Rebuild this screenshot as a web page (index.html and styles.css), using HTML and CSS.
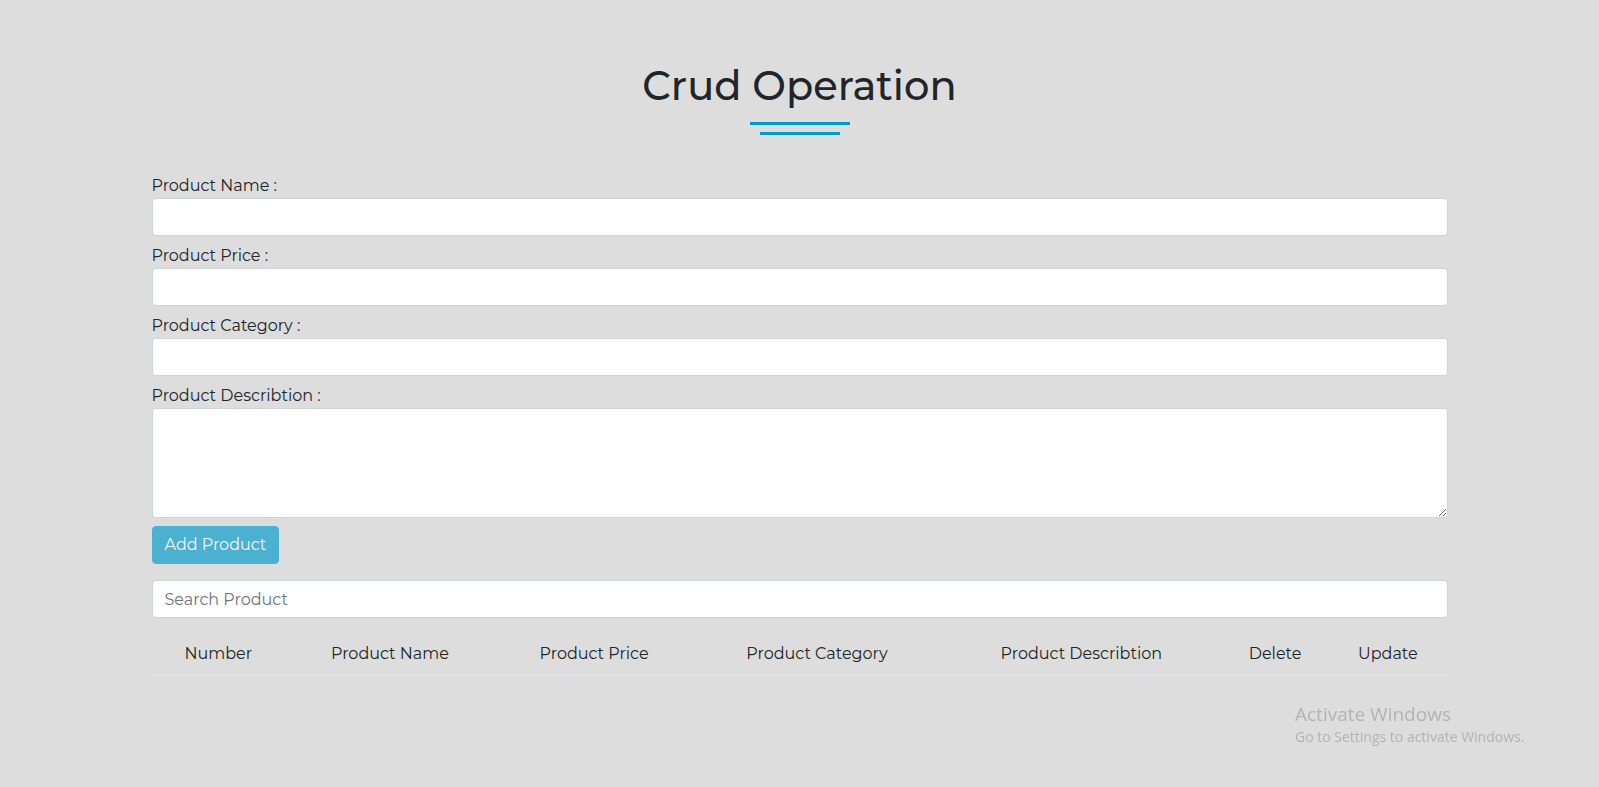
FILE: index.html
```html
<!DOCTYPE html>
<html lang="en">
<head>
  <meta charset="utf-8">
  <meta name="viewport" content="width=device-width, initial-scale=1">
  <title>Crud Operation</title>
  <link rel="stylesheet" href="styles.css">
</head>
<body>
  <main class="container">
    <header class="page-header">
      <h1 class="title">Crud Operation</h1>
      <span class="bar bar-long"></span>
      <span class="bar bar-short"></span>
    </header>

    <form class="product-form">
      <label class="label" for="name">Product Name :</label>
      <input class="control" id="name" type="text">
      <label class="label" for="price">Product Price :</label>
      <input class="control" id="price" type="text">
      <label class="label" for="category">Product Category :</label>
      <input class="control" id="category" type="text">
      <label class="label" for="description">Product Describtion :</label>
      <textarea class="control control-area" id="description" rows="4"></textarea>
      <button class="button" type="button" disabled>Add Product</button>
    </form>

    <input class="control search" type="text" placeholder="Search Product" aria-label="Search Product">

    <table class="table">
      <colgroup>
        <col class="col-number">
        <col class="col-name">
        <col class="col-price">
        <col class="col-category">
        <col class="col-description">
        <col class="col-delete">
        <col class="col-update">
      </colgroup>
      <thead>
        <tr>
          <th scope="col">Number</th>
          <th scope="col">Product Name</th>
          <th scope="col">Product Price</th>
          <th scope="col">Product Category</th>
          <th scope="col">Product Describtion</th>
          <th scope="col">Delete</th>
          <th scope="col">Update</th>
        </tr>
      </thead>
      <tbody></tbody>
    </table>
  </main>

  <aside class="watermark">
    <p class="watermark-title">Activate Windows</p>
    <p class="watermark-text">Go to Settings to activate Windows.</p>
  </aside>
</body>
</html>
```
FILE: styles.css
```css
*,
*::before,
*::after {
  box-sizing: border-box;
}

body {
  margin: 0;
  background: #ddd;
  color: #212529;
  font-family: Montserrat, Inter, sans-serif;
  font-size: 16px;
  font-weight: 400;
  line-height: 24px;
}

.container {
  max-width: 1320px;
  margin: 0 auto;
  padding: 62px 12px 48px;
}

.page-header {
  display: flex;
  flex-direction: column;
  align-items: center;
  margin-bottom: 39px;
}

.title {
  margin: 0 0 12px;
  font-size: 40px;
  font-weight: 500;
  line-height: 48px;
}

.bar {
  height: 3px;
  background: #09c;
}

.bar-long {
  width: 100px;
  margin-bottom: 7px;
}

.bar-short {
  width: 80px;
}

.product-form {
  display: flex;
  flex-direction: column;
  align-items: flex-start;
}

.control {
  display: block;
  width: 100%;
  height: 38px;
  margin: 0 0 8px;
  padding: 6px 12px;
  border: 1px solid #ced4da;
  border-radius: 4px;
  background: #fff;
  color: #212529;
  font: inherit;
  appearance: none;
}

.control::placeholder {
  color: #6c757d;
  opacity: 1;
}

.control-area {
  height: auto;
  resize: vertical;
}

.button {
  padding: 6px 12px;
  border: 1px solid #09c;
  border-radius: 4px;
  background: #09c;
  color: #fff;
  font: inherit;
  opacity: 0.65;
}

.search {
  margin: 16px 0;
}

.table {
  width: 100%;
  table-layout: fixed;
  border-collapse: separate;
  border-spacing: 0;
  text-align: center;
}

.table th {
  padding: 8px;
  border-bottom: 1px solid #e2e2ec;
  font-weight: 400;
}

.col-number { width: 10.3%; }
.col-name { width: 16.2%; }
.col-price { width: 15.3%; }
.col-category { width: 19.1%; }
.col-description { width: 21.7%; }
.col-delete { width: 8.2%; }
.col-update { width: 9.2%; }

.watermark {
  position: fixed;
  right: 68px;
  bottom: 40px;
  width: 236px;
  color: #b3b3b3;
  font-family: "Segoe UI", "Open Sans", sans-serif;
}

.watermark p {
  margin: 0;
}

.watermark-title {
  font-size: 19px;
  line-height: 26px;
}

.watermark-text {
  font-size: 14px;
  line-height: 20px;
}
```
